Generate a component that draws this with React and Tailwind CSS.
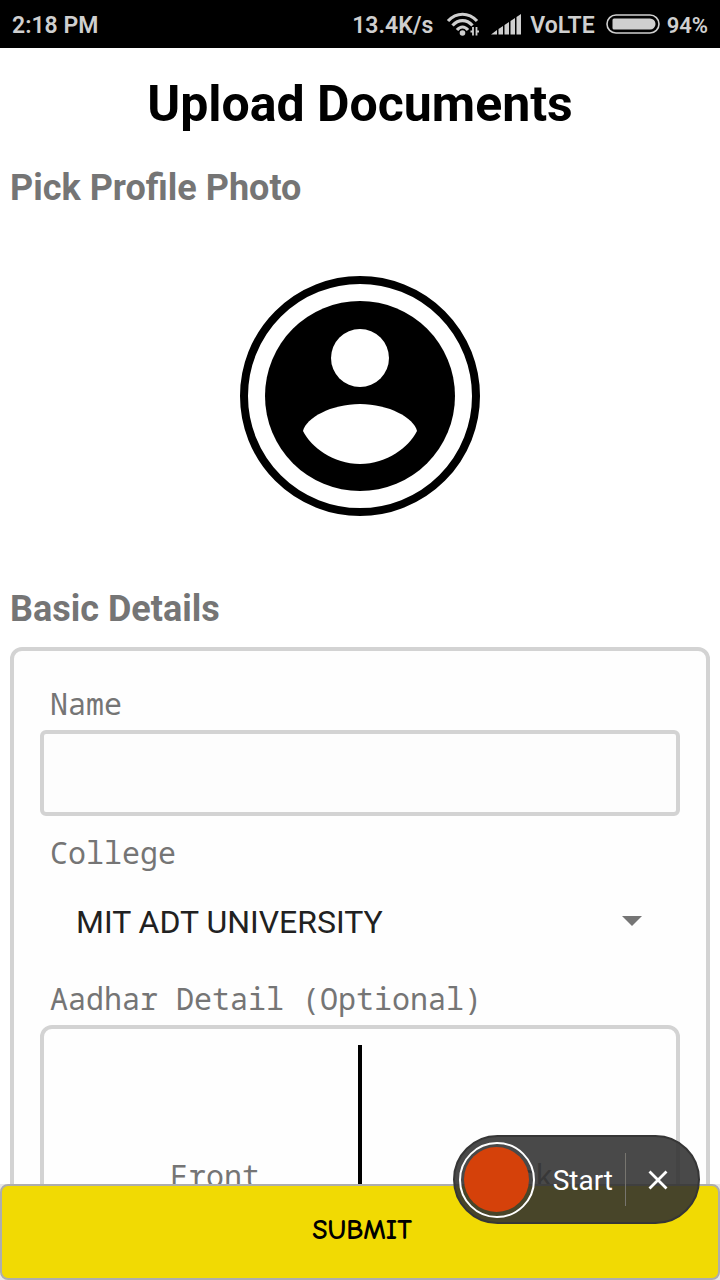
import { useState } from "react";

const label = "flex h-[50px] items-center pb-1 pl-[10px] font-['Noto_Sans_Mono','Droid_Sans_Mono','DejaVu_Sans_Mono',monospace] text-[30px] text-[#757575]";

function WifiIcon() {
  return (
    <svg width="34" height="26" viewBox="0 0 34 26" fill="none" stroke="#cfcfcf" strokeWidth="3.200" aria-hidden="true">
      <path d="M2 10C10.500 1 22.500 1 31 10" />
      <path d="M6.500 14.500C12.500 8 20.500 8 26.500 14.500" />
      <path d="M11 19C14.500 15 18.500 15 22 19" />
      <circle cx="16.500" cy="22" r="2.800" fill="#cfcfcf" stroke="none" />
      <path d="M26 25V16.500M31 16.500V25" stroke="#000" strokeWidth="5" />
      <path d="M27 16v8.500M30.500 16v8.500" strokeWidth="1.800" />
      <path d="M24.500 20.500h2.500M30.500 20.500h2.500" strokeWidth="1.800" />
    </svg>
  );
}

function SignalIcon() {
  return (
    <svg width="32" height="22" viewBox="0 0 32 22" fill="#cfcfcf" aria-hidden="true">
      <path d="M1 21.500L7 17v4.500zM8.500 16l4.500-3v8.500H8.500zM14.500 12l4.500-3v12.500h-4.500zM20.500 8l4.500-3v16.500h-4.500zM26.500 4l4.500-3v20.500h-4.500z" />
    </svg>
  );
}

function BatteryIcon() {
  return (
    <svg width="54" height="20" viewBox="0 0 54 20" aria-hidden="true">
      <rect x="1" y="1" width="52" height="18" rx="9" fill="none" stroke="#cfcfcf" strokeWidth="1.600" />
      <path d="M8 4.500H44a5.500 5.500 0 0 1 0 11H8a1.500 1.500 0 0 1-1.500-1.500V6A1.500 1.500 0 0 1 8 4.500z" fill="#cfcfcf" />
    </svg>
  );
}

function AvatarIcon() {
  return (
    <svg width="190" height="190" viewBox="0 0 190 190" aria-hidden="true">
      <circle cx="95" cy="95" r="95" />
      <circle cx="95" cy="57" r="29" fill="#fff" />
      <path d="M38 130C41 117 66 103 95 103S149 117 152 130C144 146 122 163 95 163S46 146 38 130z" fill="#fff" />
    </svg>
  );
}

function StatusBar() {
  return (
    <header className="flex h-12 shrink-0 items-center justify-between bg-black px-3 text-[23px] font-semibold text-[#cfcfcf]">
      <span className="pt-1">2:18 PM</span>
      <div className="flex items-center">
        <span className="pt-1">13.4K/s</span>
        <span className="ml-[13px]"><WifiIcon /></span>
        <span className="ml-[10px]"><SignalIcon /></span>
        <span className="ml-2 pt-1">VoLTE</span>
        <span className="ml-[11px]"><BatteryIcon /></span>
        <span className="ml-[7px] pt-[3px] text-[22px]">94%</span>
      </div>
    </header>
  );
}

function SectionTitle({ children }) {
  return <h2 className="flex h-14 items-center px-[10px] text-[36px] font-bold text-[#757575]">{children}</h2>;
}

function RecorderPill({ onClose }) {
  return (
    <div className="absolute right-5 bottom-14 flex h-[89px] items-center rounded-full border-2 border-[#363636] bg-[#2f2f2f]/[0.875] pl-1 text-white">
      <button type="button" className="flex items-center">
        <span className="flex size-[76px] items-center justify-center rounded-full border-2 border-white">
          <span className="size-[65px] rounded-full bg-[#d5410a]" />
        </span>
        <span className="ml-[18px] pt-[2px] text-[28px]">Start</span>
      </button>
      <span className="ml-3 h-[53px] w-px bg-[#77756f]" />
      <button type="button" aria-label="Close" onClick={onClose} className="flex h-full w-[72px] items-center pl-[22px]">
        <svg width="20" height="20" viewBox="0 0 20 20" stroke="#fff" strokeWidth="2.800" aria-hidden="true">
          <path d="M1.500 1.500l17 17M18.500 1.500l-17 17" />
        </svg>
      </button>
    </div>
  );
}

export default function App() {
  const [name, setName] = useState("");
  const [recorder, setRecorder] = useState(true);
  return (
    <div className="relative flex h-screen flex-col bg-white font-[Roboto,sans-serif]">
      <StatusBar />
      <main className="min-h-0 flex-1 overflow-y-auto [scrollbar-width:none]">
        <h1 className="flex h-28 items-center justify-center text-[50px] font-bold text-black">Upload Documents</h1>
        <SectionTitle>Pick Profile Photo</SectionTitle>
        <div className="flex justify-center pt-[60px] pb-[65px]">
          <button type="button" aria-label="Pick profile photo" className="flex size-60 items-center justify-center rounded-full border-8 border-black">
            <AvatarIcon />
          </button>
        </div>
        <SectionTitle>Basic Details</SectionTitle>
        <form id="documents" className="mx-[10px] mt-[10px] mb-5 rounded-xl border-4 border-[#d3d3d3] bg-[#fefefe] px-[26px] pt-[29px] pb-[26px]">
          <label htmlFor="name" className={label}>Name</label>
          <input
            id="name"
            value={name}
            onChange={(e) => setName(e.target.value)}
            className="block h-[86px] w-full rounded-md border-4 border-[#d3d3d3] bg-[#fdfdfd] px-4 text-[32px] outline-none"
          />
          <div className="mt-[13px]">
            <label htmlFor="college" className={label}>College</label>
            <div className="relative">
              <select id="college" className="block h-[86px] w-full appearance-none bg-transparent pr-16 pl-9 text-[32px] text-[#212121] outline-none">
                <option>MIT ADT UNIVERSITY</option>
              </select>
              <svg className="pointer-events-none absolute top-[37px] right-[38px]" width="20" height="10" viewBox="0 0 20 10" fill="#757575" aria-hidden="true">
                <path d="M0 0h20L10 10z" />
              </svg>
            </div>
          </div>
          <fieldset className="mt-[10px]">
            <legend className={label}>Aadhar Detail (Optional)</legend>
            <div className="grid h-[300px] grid-cols-[1fr_4px_1fr] rounded-xl border-4 border-[#d3d3d3] py-4 font-['Noto_Sans_Mono','Droid_Sans_Mono','DejaVu_Sans_Mono',monospace] text-[30px] text-[#757575]">
              <button type="button" className="pl-7">Front</button>
              <span className="bg-black" />
              <button type="button" className="pr-1">Back</button>
            </div>
          </fieldset>
        </form>
      </main>
      <footer className="shrink-0 bg-[#e8e8e8]">
        <button
          type="submit"
          form="documents"
          className="block h-24 w-full rounded-lg border-2 border-[#adadad] bg-[#f1da03] pb-1 pl-1 font-['Comic_Neue','Open_Sans',sans-serif] text-[28px] font-bold text-black"
        >
          SUBMIT
        </button>
      </footer>
      {recorder && <RecorderPill onClose={() => setRecorder(false)} />}
    </div>
  );
}
